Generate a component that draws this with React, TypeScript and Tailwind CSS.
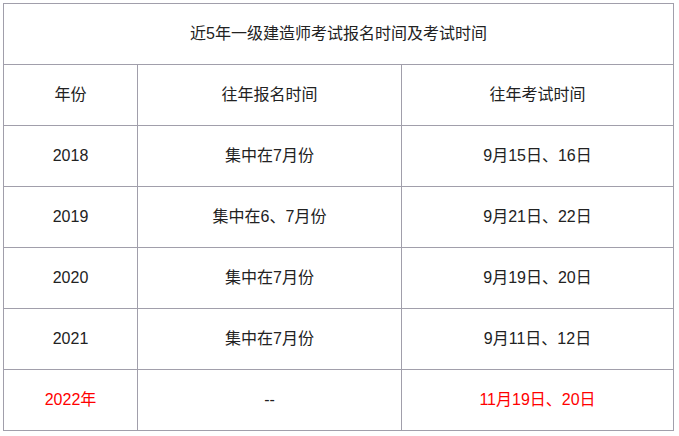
const rows = [
  { year: "2018", signup: "集中在7月份", exam: "9月15日、16日" },
  { year: "2019", signup: "集中在6、7月份", exam: "9月21日、22日" },
  { year: "2020", signup: "集中在7月份", exam: "9月19日、20日" },
  { year: "2021", signup: "集中在7月份", exam: "9月11日、12日" },
]

const cell = "border border-[#a19fab] text-center align-middle h-[61px] p-0"

export default function App() {
  return (
    <div className="bg-white w-[679px] h-[436px] pl-[3px] pt-[3px] font-['Liberation_Sans','Noto_Sans_CJK_SC',sans-serif] text-[16px] text-[#222]">
      <table className="border-collapse w-[671px] table-fixed">
        <colgroup>
          <col className="w-[134px]" />
          <col className="w-[264px]" />
          <col />
        </colgroup>
        <tbody>
          <tr>
            <td colSpan={3} className={cell}>
              近5年一级建造师考试报名时间及考试时间
            </td>
          </tr>
          <tr>
            <td className={cell}>年份</td>
            <td className={cell}>往年报名时间</td>
            <td className={cell}>往年考试时间</td>
          </tr>
          {rows.map((r) => (
            <tr key={r.year}>
              <td className={cell}>{r.year}</td>
              <td className={cell}>{r.signup}</td>
              <td className={cell}>{r.exam}</td>
            </tr>
          ))}
          <tr>
            <td className={`${cell} text-[#ff0000]`}>2022年</td>
            <td className={cell}>--</td>
            <td className={`${cell} text-[#ff0000]`}>11月19日、20日</td>
          </tr>
        </tbody>
      </table>
    </div>
  )
}
